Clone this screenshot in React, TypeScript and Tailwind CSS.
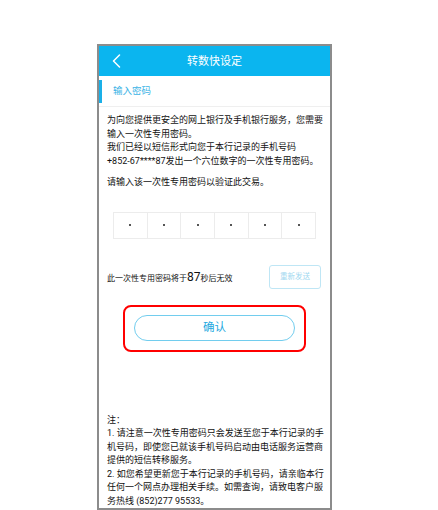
import React from "react";

const font = { fontFamily: 'Roboto, "Noto Sans CJK SC", sans-serif' };

function BackChevron() {
  return (
    <svg width="10" height="14" viewBox="0 0 10 14" fill="none">
      <path d="M8.5 1 L2.5 7 L8.5 13" stroke="#ffffff" strokeWidth="1.5" strokeLinecap="round" strokeLinejoin="round" />
    </svg>
  );
}

export default function App() {
  const digits = [0, 1, 2, 3, 4, 5];

  return (
    <div className="w-[438px] h-[510px] bg-white pt-[44px] pl-[97px]" style={font}>
      <div className="w-[235px] h-[466px] border-2 border-[#8c8c8c] overflow-hidden bg-white flex flex-col">
        {/* Header */}
        <div className="relative h-[30px] shrink-0 bg-[#0bb5ef] flex items-center justify-center">
          <div className="absolute left-[12px] top-[8px]">
            <BackChevron />
          </div>
          <span className="text-[11px] text-white leading-none">转数快设定</span>
        </div>

        {/* Sub header */}
        <div className="h-[31px] shrink-0 flex items-center border-b border-[#efefef]">
          <div className="w-[3px] h-[23px] bg-[#1ab0e8]" />
          <span className="ml-[11px] text-[9.5px] text-[#3cb4e6] leading-none">输入密码</span>
        </div>

        {/* Body */}
        <div className="pl-[8px] pt-[7px] text-[9px] leading-[13.5px] text-[#111111] whitespace-nowrap">
          <p>
            为向您提供更安全的网上银行及手机银行服务，您需要
            <br />
            输入一次性专用密码。
            <br />
            我们已经以短信形式向您于本行记录的手机号码
            <br />
            +852-67****87发出一个六位数字的一次性专用密码。
          </p>
          <p className="mt-[8px]">请输入该一次性专用密码以验证此交易。</p>
        </div>

        {/* OTP boxes */}
        <div className="mt-[22px] mx-auto w-[203px] h-[28px] flex border border-[#ececec]">
          {digits.map((d) => (
            <div
              key={d}
              className={`flex-1 flex items-center justify-center ${d > 0 ? "border-l border-[#ececec]" : ""}`}
            >
              <div className="w-[2px] h-[2px] bg-[#555555]" />
            </div>
          ))}
        </div>

        {/* Countdown row */}
        <div className="mt-[26px] pl-[8px] pr-[9px] flex items-center justify-between">
          <p className="text-[8px] text-[#111111] whitespace-nowrap leading-none">
            此一次性专用密码将于<span className="text-[12px]">87</span>秒后无效
          </p>
          <button className="w-[52px] h-[24px] rounded-[3px] border border-[#bfe6f5] text-[7.5px] text-[#9fd8f0] leading-none">
            重新发送
          </button>
        </div>

        {/* Confirm, highlighted */}
        <div className="mt-[16px] mx-auto w-[183px] h-[48px] rounded-[8px] border-2 border-[#ff0000] flex items-center justify-center">
          <button className="w-[161px] h-[26px] rounded-full border border-[#72cdee] text-[11.5px] text-[#22a8e0] leading-none">
            确认
          </button>
        </div>

        {/* Notes */}
        <div className="mt-[62px] pl-[8px] text-[9px] leading-[13.5px] text-[#111111] whitespace-nowrap">
          <p>注：</p>
          <p>
            1. 请注意一次性专用密码只会发送至您于本行记录的手
            <br />
            机号码，即使您已就该手机号码启动由电话服务运营商
            <br />
            提供的短信转移服务。
          </p>
          <p>
            2. 如您希望更新您于本行记录的手机号码，请亲临本行
            <br />
            任何一个网点办理相关手续。如需查询，请致电客户服
            <br />
            务热线 (852)277 95533。
          </p>
        </div>
      </div>
    </div>
  );
}
